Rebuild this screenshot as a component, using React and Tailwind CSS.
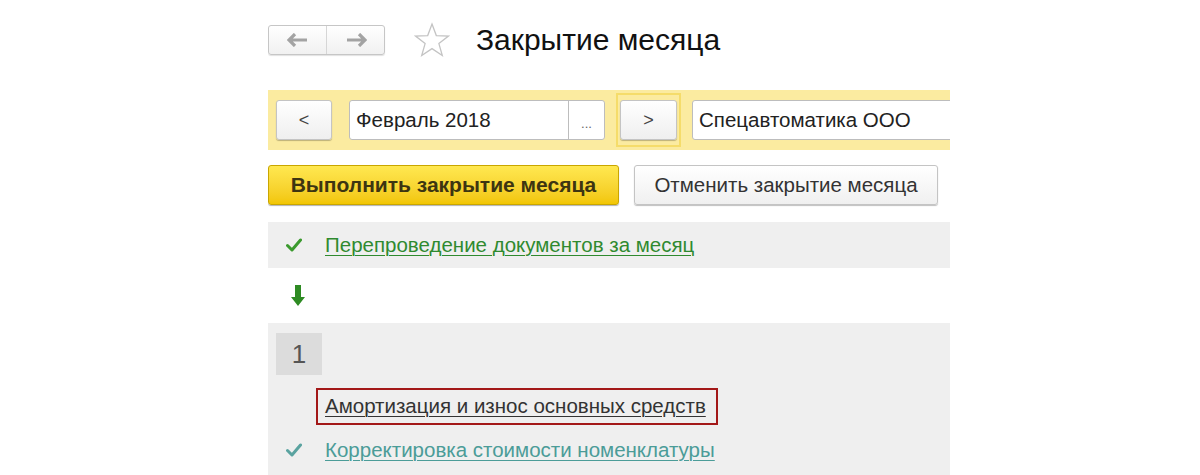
import React from "react";

const font = { fontFamily: '"Liberation Sans", Arial, sans-serif' };

function Check({ color }) {
  return (
    <svg width="16" height="14" viewBox="0 0 16 14">
      <path d="M1.5 7.5 L6 12 L14.5 2" fill="none" stroke={color} strokeWidth="3" strokeLinecap="round" strokeLinejoin="round" />
    </svg>
  );
}

export default function App() {
  return (
    <div className="w-[1200px] h-[475px] overflow-hidden bg-white" style={font}>
      <div className="ml-[268px] w-[682px] overflow-hidden">
        {/* header */}
        <div className="flex items-center h-[30px] mt-[25px]">
          <div className="flex h-[30px] w-[117px] shrink-0 rounded-[3px] border border-[#c6c6c6] bg-gradient-to-b from-white to-[#f1f1f1] shadow-[0_1px_1px_rgba(0,0,0,0.12)]">
            <div className="flex-1 flex items-center justify-center border-r border-[#d6d6d6]">
              <svg width="22" height="14" viewBox="0 0 22 14">
                <path d="M8 1 L2 7 L8 13 M2 7 H20" fill="none" stroke="#a3a3a3" strokeWidth="3.2" strokeLinejoin="miter" />
              </svg>
            </div>
            <div className="flex-1 flex items-center justify-center">
              <svg width="22" height="14" viewBox="0 0 22 14">
                <path d="M14 1 L20 7 L14 13 M20 7 H2" fill="none" stroke="#a3a3a3" strokeWidth="3.2" strokeLinejoin="miter" />
              </svg>
            </div>
          </div>
          <div className="ml-[28px] w-[38px] h-[36px] flex items-center justify-center">
            <svg width="38" height="36" viewBox="0 0 38 36">
              <path d="M19 2 L23.3 13.6 L35.5 14 L25.9 21.6 L29.3 33.5 L19 26.6 L8.7 33.5 L12.1 21.6 L2.5 14 L14.7 13.6 Z" fill="none" stroke="#c4c4c4" strokeWidth="1.3" strokeLinejoin="miter" />
            </svg>
          </div>
          <div className="ml-[25px] text-[30px] leading-none text-[#111] whitespace-nowrap">Закрытие месяца</div>
        </div>

        {/* yellow bar */}
        <div className="mt-[35px] h-[60px] bg-[#fbeba0] flex items-center pl-[8px] whitespace-nowrap">
          <div className="w-[56px] h-[40px] shrink-0 rounded-[3px] border border-[#c4c4c4] bg-gradient-to-b from-white to-[#efefef] shadow-[0_1px_1px_rgba(0,0,0,0.25)] flex items-center justify-center text-[18px] text-[#444]">&lt;</div>
          <div className="ml-[17px] w-[256px] h-[40px] shrink-0 rounded-[3px] border border-[#bdbdbd] bg-white flex">
            <div className="flex-1 flex items-center pl-[6px] text-[20.5px] text-[#222]">Февраль 2018</div>
            <div className="w-[36px] border-l border-[#bdbdbd] flex items-end justify-center pb-[9px] text-[13px] text-[#666] leading-none">...</div>
          </div>
          <div className="ml-[11px] w-[65px] h-[54px] shrink-0 border-2 border-[#f5dc6a] flex items-center justify-center">
            <div className="w-[57px] h-[40px] rounded-[3px] border border-[#c4c4c4] bg-gradient-to-b from-white to-[#efefef] shadow-[0_1px_1px_rgba(0,0,0,0.25)] flex items-center justify-center text-[18px] text-[#444]">&gt;</div>
          </div>
          <div className="ml-[11px] w-[300px] h-[40px] shrink-0 rounded-[3px] border border-[#bdbdbd] bg-white flex items-center pl-[6px] text-[20.5px] text-[#222]">Спецавтоматика ООО</div>
        </div>

        {/* action buttons */}
        <div className="mt-[15px] flex items-center h-[40px] whitespace-nowrap">
          <div className="w-[351px] h-[40px] shrink-0 rounded-[3px] border border-[#c9a600] bg-gradient-to-b from-[#ffe84f] to-[#f2c600] shadow-[0_1px_1px_rgba(0,0,0,0.3)] flex items-center justify-center text-[21px] font-bold text-[#3d3511]">Выполнить закрытие месяца</div>
          <div className="ml-[15px] w-[304px] h-[40px] shrink-0 rounded-[3px] border border-[#c4c4c4] bg-gradient-to-b from-white to-[#f0f0f0] shadow-[0_1px_1px_rgba(0,0,0,0.25)] flex items-center justify-center text-[20.5px] text-[#333]">Отменить закрытие месяца</div>
        </div>

        {/* row 1 */}
        <div className="mt-[17px] h-[46px] bg-[#efefef] flex items-center whitespace-nowrap">
          <div className="w-[57px] flex justify-center pr-[6px]"><Check color="#3b9a2e" /></div>
          <span className="text-[20.5px] text-[#2f8a2f] underline decoration-1 underline-offset-[3px]">Перепроведение документов за месяц</span>
        </div>

        {/* arrow */}
        <div className="h-[55px] flex items-center pl-[23px]">
          <svg width="14" height="22" viewBox="0 0 14 22">
            <path d="M4 0 H10 V12 H14 L7 21 L0 12 H4 Z" fill="#2e8b23" />
          </svg>
        </div>

        {/* panel 2 */}
        <div className="bg-[#efefef] h-[160px] pt-[10px] whitespace-nowrap">
          <div className="ml-[8px] w-[46px] h-[42px] bg-[#dcdcdc] flex items-center justify-center text-[26px] text-[#555]">1</div>
          <div className="mt-[13px] ml-[48px] w-[402px] h-[37px] border-2 border-[#a31818] flex items-center pl-[7px]">
            <span className="text-[20.5px] text-[#333] underline decoration-1 underline-offset-[3px]">Амортизация и износ основных средств</span>
          </div>
          <div className="mt-[10px] h-[30px] flex items-center">
            <div className="w-[57px] flex justify-center pr-[6px]"><Check color="#5aa3a0" /></div>
            <span className="text-[20.5px] text-[#4b9c98] underline decoration-1 underline-offset-[3px]">Корректировка стоимости номенклатуры</span>
          </div>
        </div>
      </div>
    </div>
  );
}
